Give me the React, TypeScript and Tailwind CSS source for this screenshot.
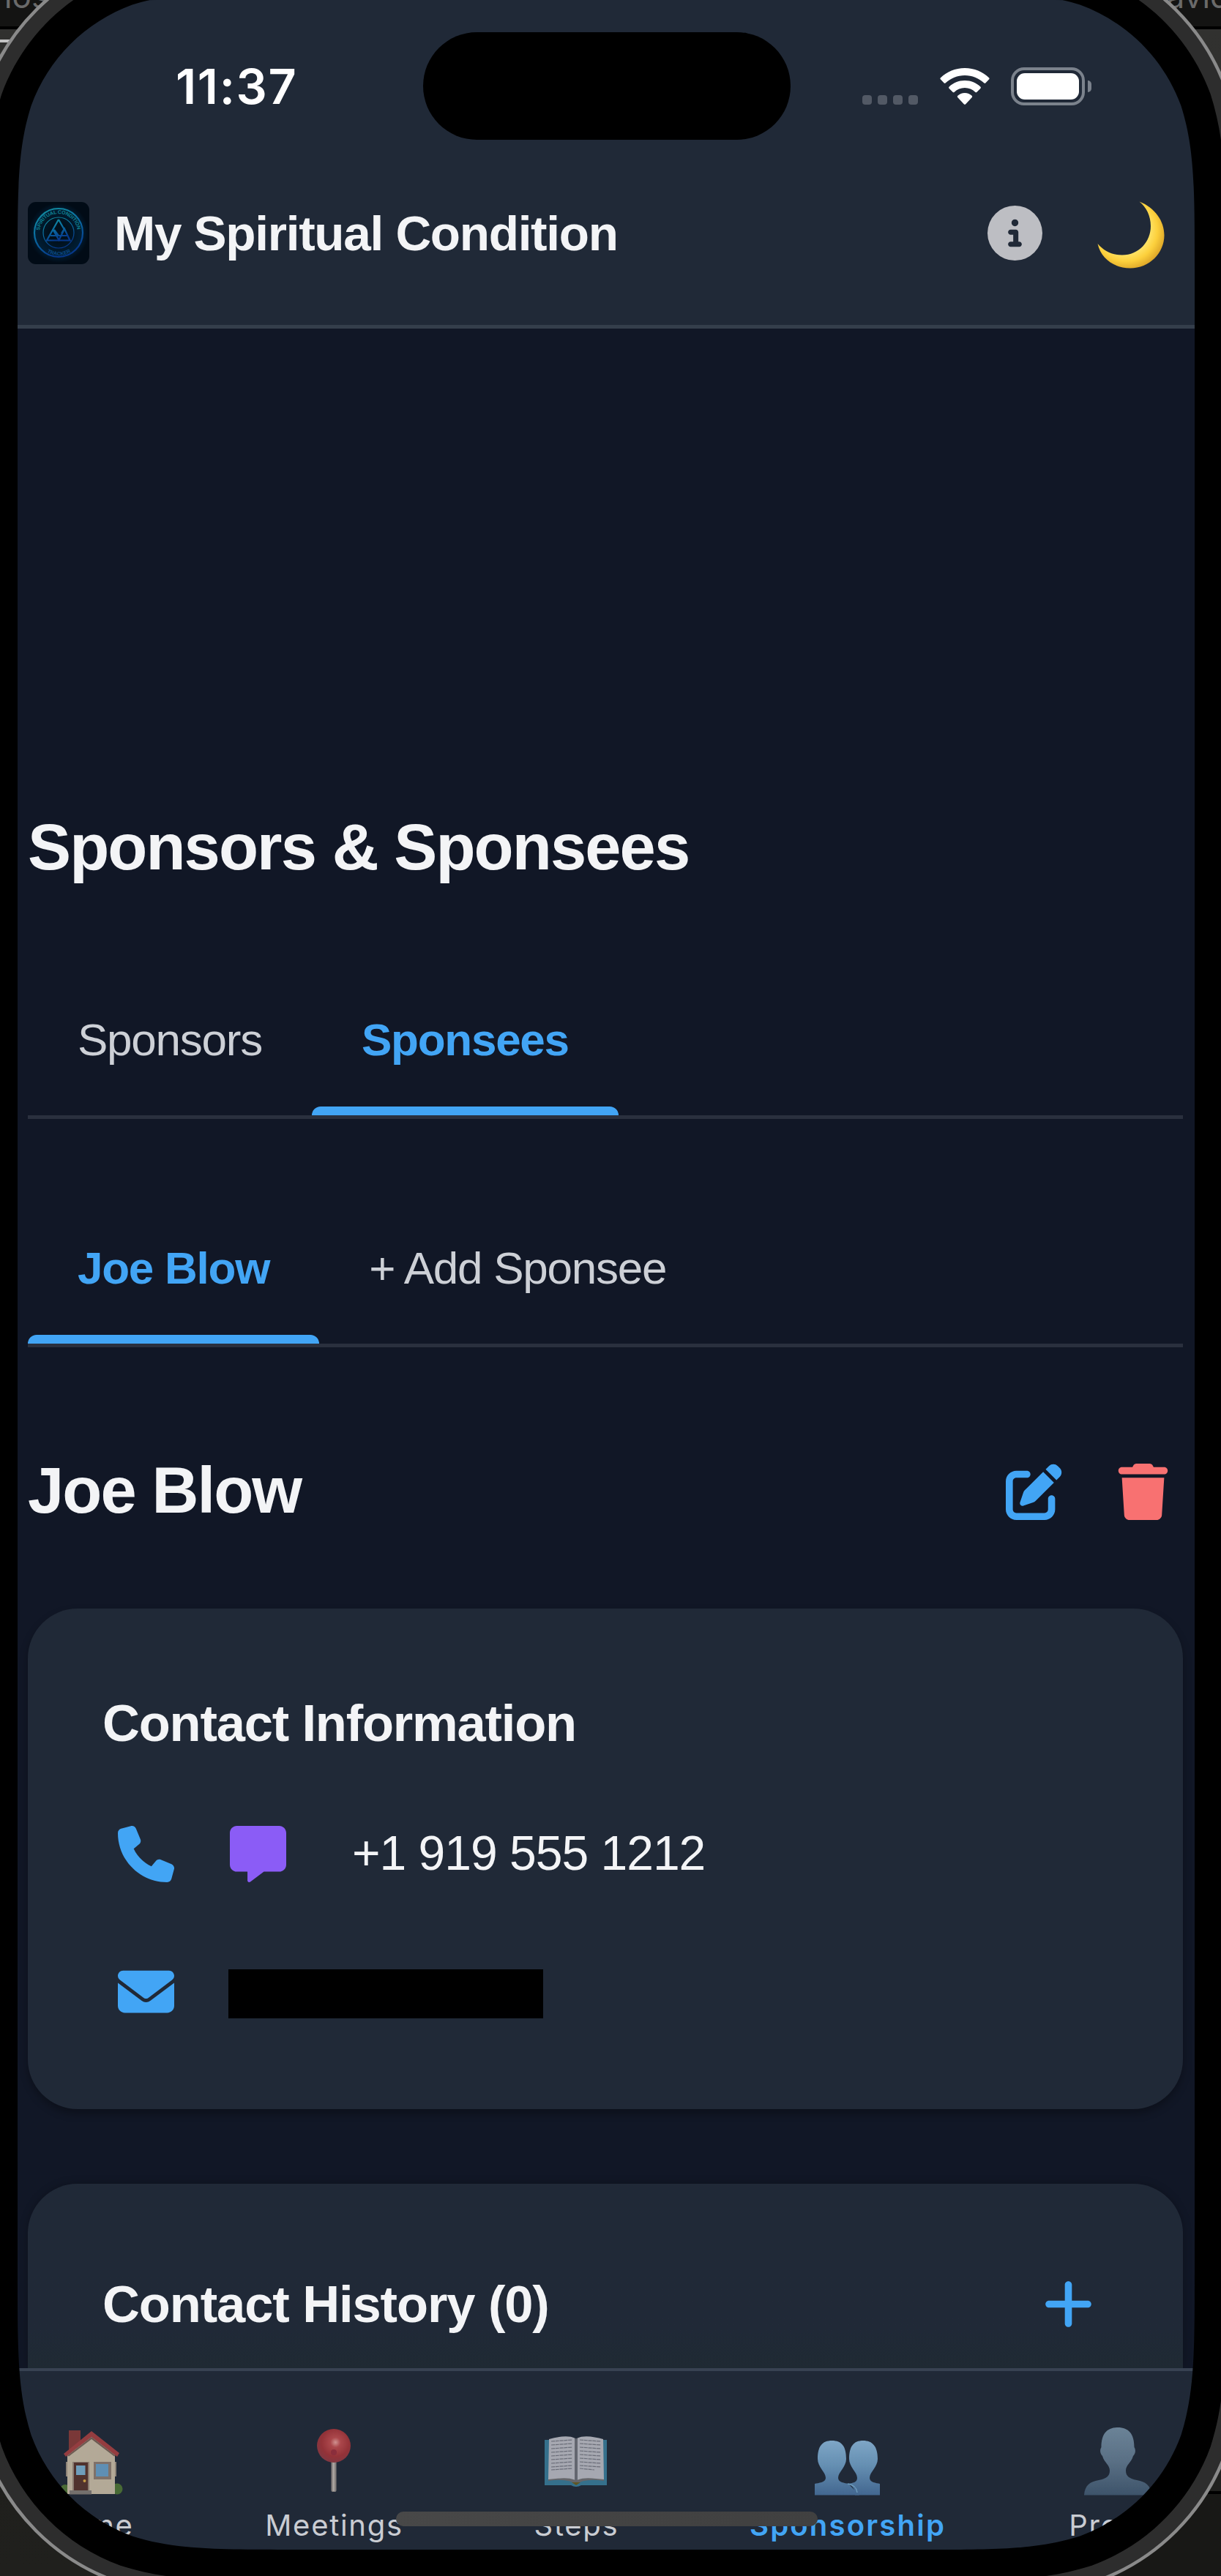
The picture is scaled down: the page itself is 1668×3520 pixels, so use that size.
import React from "react";
import {
  FaCircleInfo,
  FaEnvelope,
  FaMessage,
  FaPenToSquare,
  FaPhone,
  FaPlus,
  FaTrash,
} from "react-icons/fa6";

/** Rounded rectangle with continuous (superellipse-like) corners. */
function smoothRect(x: number, y: number, w: number, h: number, r: number) {
  const a = 1.52866 * r;
  const b = 1.08849 * r;
  const c = 0.86841 * r;
  const d = 0.63149 * r;
  const e = 0.07491 * r;
  const f = 0.37282 * r;
  const g = 0.16906 * r;
  const R = x + w;
  const B = y + h;
  return [
    `M${x + a} ${y}H${R - a}`,
    `C${R - b} ${y} ${R - c} ${y} ${R - d} ${y + e}`,
    `C${R - f} ${y + g} ${R - g} ${y + f} ${R - e} ${y + d}`,
    `C${R} ${y + c} ${R} ${y + b} ${R} ${y + a}`,
    `V${B - a}`,
    `C${R} ${B - b} ${R} ${B - c} ${R - e} ${B - d}`,
    `C${R - g} ${B - f} ${R - f} ${B - g} ${R - d} ${B - e}`,
    `C${R - c} ${B} ${R - b} ${B} ${R - a} ${B}`,
    `H${x + a}`,
    `C${x + b} ${B} ${x + c} ${B} ${x + d} ${B - e}`,
    `C${x + f} ${B - g} ${x + g} ${B - f} ${x + e} ${B - d}`,
    `C${x} ${B - c} ${x} ${B - b} ${x} ${B - a}`,
    `V${y + a}`,
    `C${x} ${y + b} ${x} ${y + c} ${x + e} ${y + d}`,
    `C${x + g} ${y + f} ${x + f} ${y + g} ${x + d} ${y + e}`,
    `C${x + c} ${y} ${x + b} ${y} ${x + a} ${y}Z`,
  ].join("");
}

const outset = (n: number) =>
  smoothRect(24 - n, -12 - n, 1608 + 2 * n, 3496 + 2 * n, 248 + n);

function Desktop() {
  return (
    <div className="absolute inset-0 flex justify-between bg-[#111110] font-['Inter',sans-serif] text-[44px] leading-[40px] text-[#6a6a6a]">
      <div className="flex w-[160px] flex-col">
        <div className="h-[36px] bg-[#141413]">
          <div className="-ml-[22px] -mt-[25px]">mos</div>
        </div>
        <div className="h-[4px] bg-black" />
        <div className="h-[14px] bg-[#31312f]" />
        <div className="h-[4px] bg-[#c4c4c4]" />
        <div className="grow bg-gradient-to-b from-[#30302e] via-[#1c1c1a] to-[#20201d]" />
      </div>
      <div className="flex w-[160px] flex-col">
        <div className="h-[36px] bg-[#141413] text-right">
          <div className="-mr-[12px] -mt-[25px]">avid</div>
        </div>
        <div className="h-[4px] bg-black" />
        <div className="h-[3364px] bg-gradient-to-b from-[#31312f] to-[#20201e]" />
        <div className="h-[4px] bg-black" />
        <div className="grow bg-[#181816]" />
      </div>
    </div>
  );
}

function DeviceFrame() {
  return (
    <svg className="pointer-events-none absolute inset-0" width="1668" height="3520" viewBox="0 0 1668 3520">
      <path d={outset(66) + outset(43)} fill="#2d2d2d" fillRule="evenodd" />
      <path d={outset(66)} fill="none" stroke="#8a8a8a" strokeWidth="4.5" />
      <path d={outset(43.5) + outset(0)} fill="#000" fillRule="evenodd" />
    </svg>
  );
}

function AppLogo() {
  return (
    <svg width="84" height="85" viewBox="0 0 84 85">
      <defs>
        <linearGradient id="neon" x1="0" y1="0" x2="0.4" y2="1">
          <stop offset="0" stopColor="#14939e" />
          <stop offset="0.5" stopColor="#0a6ea2" />
          <stop offset="1" stopColor="#06388c" />
        </linearGradient>
        <radialGradient id="glow">
          <stop offset="0.3" stopColor="#01101c" />
          <stop offset="0.75" stopColor="#011d33" />
          <stop offset="1" stopColor="#010b16" />
        </radialGradient>
        <path id="arcTop" d="M16 42A26 26 0 0 1 68 42" />
        <path id="arcBottom" d="M11.500 42A31 31 0 0 0 73.500 42" />
      </defs>
      <rect width="84" height="85" rx="11" fill="#010b16" />
      <circle cx="42" cy="42" r="41" fill="url(#glow)" />
      <g fill="none" stroke="url(#neon)">
        <circle cx="42" cy="42" r="33" strokeWidth="2.200" />
        <circle cx="42" cy="42" r="21" strokeWidth="1.200" />
        <path d="M42 24L26 52.500H57.500L50 36.500L46 43M42 24L49.500 37M34.500 38L42.500 52L49 39M31 46H54M36 38L42 46" strokeWidth="2.200" />
      </g>
      <g fill="#0f8494" fontFamily="Liberation Sans, sans-serif" fontWeight="700" fontSize="7">
        <text textLength="74">
          <textPath href="#arcTop" startOffset="3">SPIRITUAL CONDITION</textPath>
        </text>
        <text fill="#0a4a86">
          <textPath href="#arcBottom" startOffset="50%" textAnchor="middle">TRACKER</textPath>
        </text>
      </g>
    </svg>
  );
}

function MoonIcon() {
  return (
    <svg width="92" height="92" viewBox="0 0 92 92">
      <defs>
        <radialGradient id="moon" cx="0.42" cy="0.42" r="0.6">
          <stop offset="0.55" stopColor="#ffe873" />
          <stop offset="0.8" stopColor="#fcd03c" />
          <stop offset="1" stopColor="#dfa92a" />
        </radialGradient>
      </defs>
      <path d="M57.500 0.500C79 9 91.500 27 91.500 46.500C91.500 71 71 91.500 45 91.500C24 91.500 5 79 0.500 58C9 68 20 73.500 34 73.500C57 73.500 73 55 73 34C73 20 67 8 57.500 0.500Z" fill="url(#moon)" />
    </svg>
  );
}

function StatusBar() {
  return (
    <div className="relative flex h-[235px] items-center">
      <div className="ml-[216px] pt-[2px] font-['Inter',sans-serif] text-[66.500px] font-semibold leading-none tracking-[1.700px] text-white">
        11:37
      </div>
      <div className="absolute left-[553.500px] top-[44px] h-[147px] w-[502px] rounded-full bg-black" />
      <div className="absolute left-[1153.500px] top-[92px] flex h-[52px]">
        <div className="flex h-[51px] items-end gap-[8.300px]">
          {[0, 1, 2, 3].map((i) => (
            <span key={i} className="size-[13px] rounded-[4px] bg-[#525965]" />
          ))}
        </div>
        <svg className="ml-[30px] mt-px" width="68" height="50" viewBox="0 0 68 50" fill="#fff">
          <path d="M34 0C47 0 58.500 5 67 13.200C67.800 14 67.800 14.800 67 15.600L62.500 20.300C61.800 21 61 21 60.200 20.300C53 13.700 44 10 34 10S15 13.700 7.800 20.300C7 21 6.200 21 5.500 20.300L1 15.600C0.200 14.800 0.200 14 1 13.200C9.500 5 21 0 34 0Z" />
          <path d="M34 17C42.500 17 49.800 20.200 55.300 25.500C56.100 26.300 56.100 27.100 55.300 27.900L50.500 32.700C49.800 33.400 49 33.400 48.200 32.700C44.400 29.200 39.500 27 34 27S23.600 29.200 19.800 32.700C19 33.400 18.200 33.400 17.500 32.700L12.700 27.900C11.900 27.100 11.900 26.300 12.700 25.500C18.200 20.200 25.500 17 34 17Z" />
          <path d="M34 34C37.800 34 41.100 35.400 43.600 37.800C44.400 38.600 44.400 39.400 43.600 40.200L35.200 49.200C34.400 50 33.600 50 32.800 49.200L24.400 40.200C23.600 39.400 23.600 38.600 24.400 37.800C26.900 35.400 30.200 34 34 34Z" />
        </svg>
        <div className="ml-[29px] h-[52px] w-[101px] rounded-[18px] border-4 border-[#7b828c] p-[4px]">
          <div className="h-full w-full rounded-[11px] bg-white" />
        </div>
        <div className="ml-[4px] mt-[18px] h-[16px] w-[5px] rounded-r-full bg-[#7b828c]" />
      </div>
    </div>
  );
}

function Header() {
  return (
    <header className="h-[449px] border-b-[5px] border-[#343e4b] bg-[#202937]">
      <StatusBar />
      <div className="mt-[41px] flex h-[85px] items-center pl-[14px]">
        <AppLogo />
        <h1 className="ml-[34px] grow text-[67.500px] font-bold leading-[80px] tracking-[-1.300px] text-[#f3f4f6]">
          My Spiritual Condition
        </h1>
        <FaCircleInfo className="size-[75px] text-[#bdbec3]" />
        <div className="ml-[75px] mr-[41px] mt-[4px]">
          <MoonIcon />
        </div>
      </div>
    </header>
  );
}

function Tabs({ items, active }: { items: string[]; active: string }) {
  return (
    <div className="flex border-b-[5px] border-[#2a303e] text-[62px] leading-[182px] tracking-[-1.250px]">
      {items.map((label) => (
        <div key={label} className="flex flex-col">
          <div
            className={
              label === active
                ? "px-[68px] font-bold text-[#42a5f5]"
                : "px-[68px] text-[#cdd0d6]"
            }
          >
            {label}
          </div>
          <div
            className={
              label === active
                ? "h-[12px] rounded-t-[12px] bg-[#42a5f5]"
                : "h-[12px]"
            }
          />
        </div>
      ))}
    </div>
  );
}

function ContactCard() {
  return (
    <section className="mt-[121px] h-[684px] shrink-0 rounded-[68px] bg-[#202937] px-[102px] pt-[117px] shadow-[0_6px_12px_rgba(0,0,0,0.3)]">
      <h3 className="text-[70.500px] font-bold leading-[80px] tracking-[-1.200px]">
        Contact Information
      </h3>
      <div className="mt-[100px] flex h-[77px] items-center pl-[21px]">
        <FaPhone className="size-[77px] text-[#42a5f5]" />
        <FaMessage className="ml-[76px] size-[77px] text-[#8b5cf6]" />
        <span className="-mt-[3px] ml-[90px] text-[66px] tracking-[-1px]">
          +1 919 555 1212
        </span>
      </div>
      <div className="mt-[111px] flex h-[77px] items-center pl-[21px]">
        <FaEnvelope className="size-[77px] text-[#42a5f5]" />
        <div className="ml-[74px] mt-[5px] h-[67px] w-[430px] bg-black" />
      </div>
    </section>
  );
}

function HistoryCard() {
  return (
    <section className="mt-[102px] h-[252px] shrink-0 rounded-t-[68px] bg-gradient-to-b from-[#202937] from-80% to-[#1f2a33] pl-[102px] pr-[118px] pt-[126px] shadow-[0_0_12px_rgba(0,0,0,0.25)]">
      <div className="flex h-[77px] items-center justify-between">
        <h3 className="text-[70.500px] font-bold leading-[80px] tracking-[-1.100px]">
          Contact History (0)
        </h3>
        <FaPlus className="size-[77px] text-[#42a5f5]" />
      </div>
    </section>
  );
}

function HouseIcon() {
  return (
    <svg width="100" height="94" viewBox="0 0 100 94">
      <circle cx="16" cy="86" r="7" fill="#4b6b37" />
      <circle cx="87" cy="85" r="7.500" fill="#486a35" />
      <path d="M21 5H37V20L21 32Z" fill="#7a3838" />
      <path d="M19 36L52 12L84 36V92H19Z" fill="#b3a997" />
      <path d="M17 48H19V68H17ZM84 48H86V68H84Z" fill="#8d8378" />
      <path d="M52 6L90 36L87 41L52 14L17 41L14 37Z" fill="#943d40" />
      <path d="M52 14L85 39.500L83 40.500L52 17L21 40.500L19 39.500Z" fill="#6d5a52" />
      <rect x="26" y="48" width="23" height="40" fill="#8a7b70" />
      <rect x="28" y="49" width="19" height="38" fill="#50322e" />
      <rect x="31" y="53" width="12.500" height="13" fill="#6f9dbb" />
      <circle cx="42.500" cy="74" r="2" fill="#c59a45" />
      <rect x="55" y="48" width="24" height="24" fill="#7f7169" />
      <rect x="58" y="51" width="17" height="17" fill="#5f8fb4" />
      <rect x="22" y="87" width="30" height="5.500" fill="#74706d" />
    </svg>
  );
}

function PinIcon() {
  return (
    <svg width="100" height="94" viewBox="0 0 100 94">
      <defs>
        <radialGradient id="pin" cx="0.55" cy="0.4" r="0.6">
          <stop offset="0" stopColor="#d09290" />
          <stop offset="0.25" stopColor="#ab474b" />
          <stop offset="0.7" stopColor="#933238" />
          <stop offset="1" stopColor="#823741" />
        </radialGradient>
      </defs>
      <rect x="45.500" y="46" width="7" height="43" rx="2" fill="#85807e" />
      <rect x="47.500" y="46" width="2.500" height="42" fill="#aaa4a0" />
      <circle cx="49" cy="26" r="23" fill="url(#pin)" />
      <circle cx="49" cy="35" r="4" fill="#8a2e3c" />
    </svg>
  );
}

function BookIcon() {
  const lines = [20, 25, 30, 35, 40, 45, 50, 55, 59];
  return (
    <svg width="100" height="94" viewBox="0 0 100 94">
      <path d="M6 18H91V80H56Q49 84 42 80H6Z" fill="#35708c" />
      <path d="M11 70H87V74Q60 70 49 79Q38 70 11 74Z" fill="#65666a" />
      <path d="M12 17C24 14 38 11 48 16V73C36 68 24 71 11 72Z" fill="#a6a8b1" />
      <path d="M86 17C74 14 60 11 50 16V73C62 68 74 71 87 72Z" fill="#a6a8b1" />
      <path d="M47 16H51V74H47Z" fill="#63666f" />
      <path d="M43 76H55L49 80Z" fill="#5f5624" />
      <g stroke="#6a6d78" strokeWidth="1.200" strokeDasharray="5 0.800">
        {lines.map((y) => (
          <path key={y} d={`M15 ${y}L44 ${y - 2}M54 ${y - 2}L${y > 56 ? 74 : 83} ${y}`} />
        ))}
      </g>
    </svg>
  );
}

function PeopleIcon() {
  const head =
    "M5 93.500V78C10 77 20 76 20 70C20 62 9 55 9 44C9 27 15 19 28.500 19S48 27 48 44C48 55 37 62 37 70C37 76 46 77 51 78";
  return (
    <svg width="100" height="94" viewBox="0 0 100 94">
      <defs>
        <linearGradient id="people" x1="0" y1="19" x2="0" y2="94" gradientUnits="userSpaceOnUse">
          <stop offset="0" stopColor="#7ea6c6" />
          <stop offset="0.45" stopColor="#658fb2" />
          <stop offset="1" stopColor="#42668f" />
        </linearGradient>
      </defs>
      <path d={head + "L66 93.500Z"} fill="url(#people)" />
      <path d="M60 93.500C60 86 57 80 50 78C57 77 63 76 63 70C63 62 52 55 52 44C52 27 58 19 71 19S91 27 91 44C91 55 80 62 80 70C80 76 89 77 94 78V93.500Z" fill="url(#people)" />
      <path d="M50 78Q62 80 63 90" fill="none" stroke="#6d9abb" strokeWidth="1.500" />
    </svg>
  );
}

function PersonIcon() {
  return (
    <svg width="100" height="94" viewBox="0 0 100 94">
      <defs>
        <linearGradient id="person" x1="0" y1="0" x2="0" y2="94" gradientUnits="userSpaceOnUse">
          <stop offset="0" stopColor="#6b8397" />
          <stop offset="0.5" stopColor="#5a7085" />
          <stop offset="1" stopColor="#3d536a" />
        </linearGradient>
      </defs>
      <path d="M4 93.500C5 80 12 75 24 73C34 71 39 68 39 60C39 52 32 50 29 40C26 37 25 32 27.500 28C27.500 10 35 1 50 1S72.500 10 72.500 28C75 32 74 37 71 40C68 50 61 52 61 60C61 68 66 71 76 73C88 75 95 80 96 93.500Z" fill="url(#person)" />
    </svg>
  );
}

function BottomNav() {
  const item = "flex flex-col items-center";
  const label = "mt-[21px] tracking-[1.700px] whitespace-nowrap";
  return (
    <nav className="flex h-[248px] border-t-[4px] border-[#384252] bg-[#202937] pt-[76px] font-['Inter',sans-serif] text-[40px] leading-[40px] text-[#c9ccd2]">
      <div className={item + " w-[198px]"}>
        <HouseIcon />
        <span className={label}>Home</span>
      </div>
      <div className={item + " w-[469px]"}>
        <PinIcon />
        <span className={label}>Meetings</span>
      </div>
      <div className={item + " w-[193px]"}>
        <BookIcon />
        <span className={label}>Steps</span>
      </div>
      <div className={item + " w-[548px] font-semibold text-[#42a5f5]"}>
        <PeopleIcon />
        <span className="mt-[21px] whitespace-nowrap tracking-[2.200px]">Sponsorship</span>
      </div>
      <div className={item + " w-[190px]"}>
        <PersonIcon />
        <span className={label}>Profile</span>
      </div>
    </nav>
  );
}

export default function App() {
  return (
    <div className="relative h-[3520px] w-[1668px] overflow-hidden bg-black font-['Liberation_Sans',Arial,sans-serif]">
      <Desktop />
      <div className="relative ml-[24px] flex h-[3484px] w-[1608px] flex-col overflow-hidden rounded-[190px] bg-[#111726]">
        <Header />
        <main className="flex h-[2787px] flex-col overflow-hidden pl-[14px] pr-[16px] text-[#f3f4f6]">
          <h2 className="mt-[659px] text-[88.500px] font-bold leading-[100px] tracking-[-1.900px]">
            Sponsors &amp; Sponsees
          </h2>
          <div className="mt-[122px]">
            <Tabs items={["Sponsors", "Sponsees"]} active="Sponsees" />
          </div>
          <div className="mt-[113px]">
            <Tabs items={["Joe Blow", "+ Add Sponsee"]} active="Joe Blow" />
          </div>
          <div className="mt-[159px] flex h-[77px] items-center pr-[16px]">
            <h2 className="-mt-[4px] grow text-[88.500px] font-bold leading-[100px] tracking-[-1.900px]">
              Joe Blow
            </h2>
            <FaPenToSquare className="size-[77px] text-[#42a5f5]" />
            <FaTrash className="ml-[72px] size-[77px] text-[#f87171]" />
          </div>
          <ContactCard />
          <HistoryCard />
        </main>
        <BottomNav />
        <div className="absolute left-[516.500px] top-[3432px] h-[20px] w-[576px] rounded-full bg-gradient-to-r from-[#484848] via-[#434343] to-[#404040]" />
      </div>
      <DeviceFrame />
    </div>
  );
}
